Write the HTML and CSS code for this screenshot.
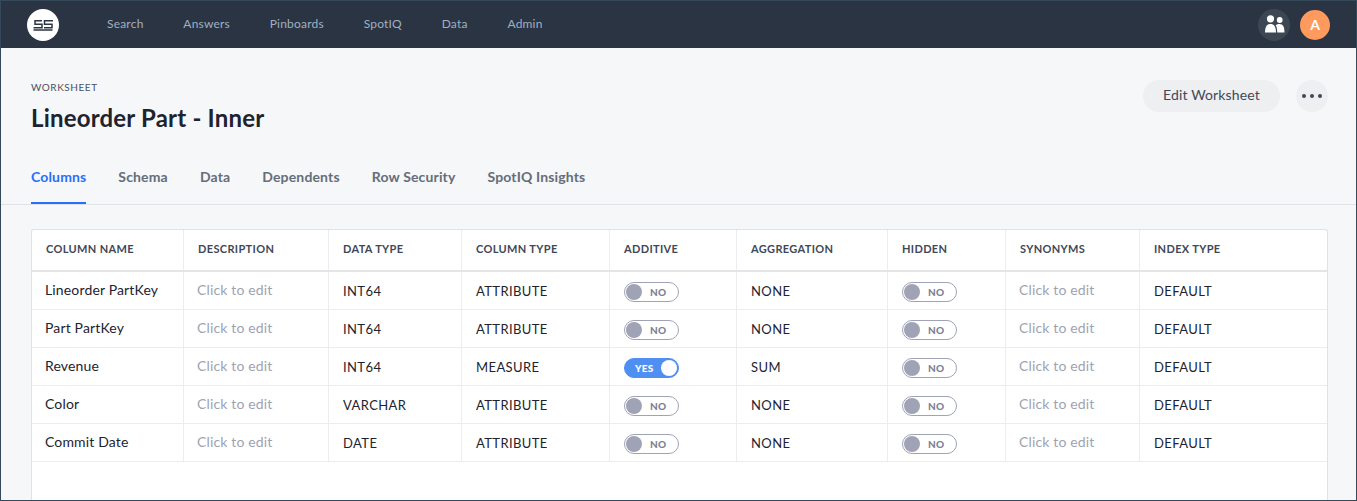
FILE: index.html
```html
<!DOCTYPE html>
<html lang="en">
<head>
    <meta charset="UTF-8">
    <meta name="viewport" content="width=device-width, initial-scale=1.0">
    <title>Lineorder Part - Inner</title>
    <link rel="stylesheet" href="styles.css">
</head>
<body>
    <header class="topbar">
        <div class="logo">
            <svg width="32" height="32" viewBox="0 0 32 32">
                <circle cx="16" cy="16" r="16" fill="#fff"/>
                <path d="M15 11.700H8V15.300H15V18.700H6.500M26 11.700H17.500V15.300H25V18.700H17M6.500 21H25.500" fill="none" stroke="#2b3442" stroke-width="1.500"/>
            </svg>
        </div>
        <nav class="mainnav">
            <a>Search</a>
            <a>Answers</a>
            <a>Pinboards</a>
            <a>SpotIQ</a>
            <a>Data</a>
            <a>Admin</a>
        </nav>
        <div class="topbar-right">
            <div class="people">
                <svg width="21" height="19" viewBox="0 0 21 19" fill="#fff">
                    <circle cx="6.500" cy="3.800" r="3.600"/>
                    <circle cx="15.700" cy="5" r="2.900"/>
                    <path d="M1 17.500c0-6 2-8.500 5.500-8.500s5.500 2.500 5.500 8.500z"/>
                    <path d="M13.200 17.500c0-3-.3-5.500-1.500-7.300.9-.8 2.300-1.200 3.900-1.200 3.400 0 4.900 2.800 4.900 8.500z"/>
                </svg>
            </div>
            <div class="avatar">A</div>
        </div>
    </header>

    <section class="page-head">
        <div class="title-row">
            <div>
                <div class="kicker">WORKSHEET</div>
                <h1>Lineorder Part - Inner</h1>
            </div>
            <div class="actions">
                <button class="edit-btn">Edit Worksheet</button>
                <button class="more-btn"><i></i><i></i><i></i></button>
            </div>
        </div>
        <div class="tabs">
            <a class="tab active">Columns</a>
            <a class="tab">Schema</a>
            <a class="tab">Data</a>
            <a class="tab">Dependents</a>
            <a class="tab">Row Security</a>
            <a class="tab">SpotIQ Insights</a>
        </div>
    </section>

    <main class="content">
        <div class="table-card">
            <table>
                <thead>
                    <tr>
                        <th class="col-name">COLUMN NAME</th>
                        <th class="col-desc">DESCRIPTION</th>
                        <th class="col-data">DATA TYPE</th>
                        <th class="col-type">COLUMN TYPE</th>
                        <th class="col-add">ADDITIVE</th>
                        <th class="col-agg">AGGREGATION</th>
                        <th class="col-hid">HIDDEN</th>
                        <th class="col-syn">SYNONYMS</th>
                        <th class="col-idx">INDEX TYPE</th>
                    </tr>
                </thead>
                <tbody>
                    <tr>
                        <td class="name">Lineorder PartKey</td>
                        <td class="edit">Click to edit</td>
                        <td>INT64</td>
                        <td>ATTRIBUTE</td>
                        <td><span class="toggle"><b>NO</b></span></td>
                        <td>NONE</td>
                        <td><span class="toggle"><b>NO</b></span></td>
                        <td class="edit">Click to edit</td>
                        <td>DEFAULT</td>
                    </tr>
                    <tr>
                        <td class="name">Part PartKey</td>
                        <td class="edit">Click to edit</td>
                        <td>INT64</td>
                        <td>ATTRIBUTE</td>
                        <td><span class="toggle"><b>NO</b></span></td>
                        <td>NONE</td>
                        <td><span class="toggle"><b>NO</b></span></td>
                        <td class="edit">Click to edit</td>
                        <td>DEFAULT</td>
                    </tr>
                    <tr>
                        <td class="name">Revenue</td>
                        <td class="edit">Click to edit</td>
                        <td>INT64</td>
                        <td>MEASURE</td>
                        <td><span class="toggle on"><b>YES</b></span></td>
                        <td>SUM</td>
                        <td><span class="toggle"><b>NO</b></span></td>
                        <td class="edit">Click to edit</td>
                        <td>DEFAULT</td>
                    </tr>
                    <tr>
                        <td class="name">Color</td>
                        <td class="edit">Click to edit</td>
                        <td>VARCHAR</td>
                        <td>ATTRIBUTE</td>
                        <td><span class="toggle"><b>NO</b></span></td>
                        <td>NONE</td>
                        <td><span class="toggle"><b>NO</b></span></td>
                        <td class="edit">Click to edit</td>
                        <td>DEFAULT</td>
                    </tr>
                    <tr>
                        <td class="name">Commit Date</td>
                        <td class="edit">Click to edit</td>
                        <td>DATE</td>
                        <td>ATTRIBUTE</td>
                        <td><span class="toggle"><b>NO</b></span></td>
                        <td>NONE</td>
                        <td><span class="toggle"><b>NO</b></span></td>
                        <td class="edit">Click to edit</td>
                        <td>DEFAULT</td>
                    </tr>
                </tbody>
            </table>
        </div>
    </main>
</body>
</html>
```

FILE: styles.css
```css
html, body {
    height: 100%;
}

body {
    margin: 0;
    box-sizing: border-box;
    height: 501px;
    overflow: hidden;
    display: flex;
    flex-direction: column;
    border: 1px solid #34495a;
    background: #f6f7f9;
    font-family: "Lato", "Open Sans", sans-serif;
    color: #1d232f;
}

/* top bar */
.topbar {
    height: 47px;
    flex: none;
    display: flex;
    align-items: center;
    background: #2b3442;
    padding: 0 26px;
}

.logo {
    width: 32px;
    height: 32px;
    margin-right: 48px;
}

.mainnav {
    display: flex;
    gap: 39.8px;
    padding-bottom: 2px;
}

.mainnav a {
    font-size: 12px;
    color: #9fb0c3;
    letter-spacing: 0.2px;
}

.topbar-right {
    margin-left: auto;
    display: flex;
    align-items: center;
    gap: 10px;
}

.people {
    width: 32px;
    height: 32px;
    border-radius: 50%;
    background: #3d4653;
    display: flex;
    align-items: center;
    justify-content: center;
}

.avatar {
    width: 30px;
    height: 30px;
    border-radius: 50%;
    background: #ff9a5f;
    color: #fff;
    font-size: 14px;
    font-weight: 700;
    text-align: center;
    line-height: 30px;
}

/* page heading */
.page-head {
    flex: none;
    height: 157px;
    box-sizing: border-box;
    display: flex;
    flex-direction: column;
    justify-content: space-between;
    border-bottom: 1px solid #dfe2e6;
    padding: 32px 28px 0 30px;
}

.title-row {
    display: flex;
    justify-content: space-between;
    align-items: flex-start;
}

.kicker {
    font-size: 10px;
    line-height: 14px;
    letter-spacing: 0.55px;
    color: #4a5160;
}

h1 {
    margin: 9px 0 0;
    font-size: 24px;
    line-height: 30px;
    font-weight: 700;
    letter-spacing: 0.2px;
    color: #1d232f;
}

.actions {
    display: flex;
    gap: 16px;
}

button {
    border: none;
    background: #eeeff1;
    font-family: inherit;
    color: #3f4858;
}

.edit-btn {
    width: 137px;
    height: 32px;
    border-radius: 16px;
    font-size: 14px;
    letter-spacing: 0.15px;
    padding: 0 0 3px;
}

.more-btn {
    width: 32px;
    height: 32px;
    border-radius: 50%;
    display: flex;
    align-items: center;
    justify-content: center;
    gap: 4px;
    padding: 0;
}

.more-btn i {
    width: 4px;
    height: 4px;
    border-radius: 50%;
    background: #3f4858;
}

.tabs {
    display: flex;
    gap: 32px;
}

.tab {
    font-size: 14px;
    font-weight: 700;
    line-height: 17px;
    letter-spacing: 0.15px;
    color: #656d7a;
    padding-bottom: 19px;
}

.tab.active {
    color: #2770fb;
    border-bottom: 2px solid #2770fb;
    padding-bottom: 17px;
}

/* table */
.content {
    flex: 1;
    min-height: 0;
    padding: 24px 28px 0 30px;
}

.table-card {
    height: 100%;
    box-sizing: border-box;
    background: #fff;
    border: 1px solid #dfe2e6;
    border-bottom: none;
    border-radius: 3px 3px 0 0;
}

table {
    width: 100%;
    table-layout: fixed;
    border-collapse: collapse;
}

th {
    height: 41px;
    box-sizing: border-box;
    padding: 0 14px 3px 14.5px;
    text-align: left;
    font-size: 11px;
    font-weight: 700;
    color: #3f4858;
    letter-spacing: 0.35px;
    border-bottom: 2px solid #e3e5e9;
    border-left: 1px solid #ebedf0;
}

td {
    height: 38px;
    box-sizing: border-box;
    padding: 1px 14px 0 14.5px;
    font-size: 13px;
    letter-spacing: 0.4px;
    color: #1d232f;
    border-bottom: 1px solid #ebedf0;
    border-left: 1px solid #ebedf0;
    white-space: nowrap;
}

th:first-child, td:first-child {
    border-left: none;
}

th:first-child {
    padding-left: 14px;
}

td.name, td.edit {
    padding: 0 14px 1px 13.5px;
    font-size: 14px;
    letter-spacing: 0.15px;
}

td.name {
    padding-left: 13px;
}

td.edit {
    color: #9fa2b0;
}

.col-name { width: 151px; }
.col-desc { width: 145px; }
.col-data { width: 133px; }
.col-type { width: 148px; }
.col-add { width: 127px; }
.col-agg { width: 151px; }
.col-hid { width: 118px; }
.col-syn { width: 134px; }

/* toggles */
.toggle {
    display: block;
    position: relative;
    width: 55px;
    height: 20px;
    margin-top: 2px;
    box-sizing: border-box;
    border: 1px solid #a0a3b5;
    border-radius: 10px;
    background: #fff;
}

.toggle::before {
    content: "";
    position: absolute;
    left: 1px;
    top: 1px;
    width: 16px;
    height: 16px;
    border-radius: 50%;
    background: #a0a3b5;
}

.toggle b {
    position: absolute;
    left: 25px;
    top: 0;
    font-size: 10px;
    line-height: 18px;
    font-weight: 900;
    letter-spacing: 0.2px;
    color: #7d8192;
}

.toggle.on {
    background: #4f8ff2;
    border-color: #4f8ff2;
}

.toggle.on::before {
    left: auto;
    right: 1px;
    background: #fff;
}

.toggle.on b {
    left: 10px;
    color: #fff;
}
```
